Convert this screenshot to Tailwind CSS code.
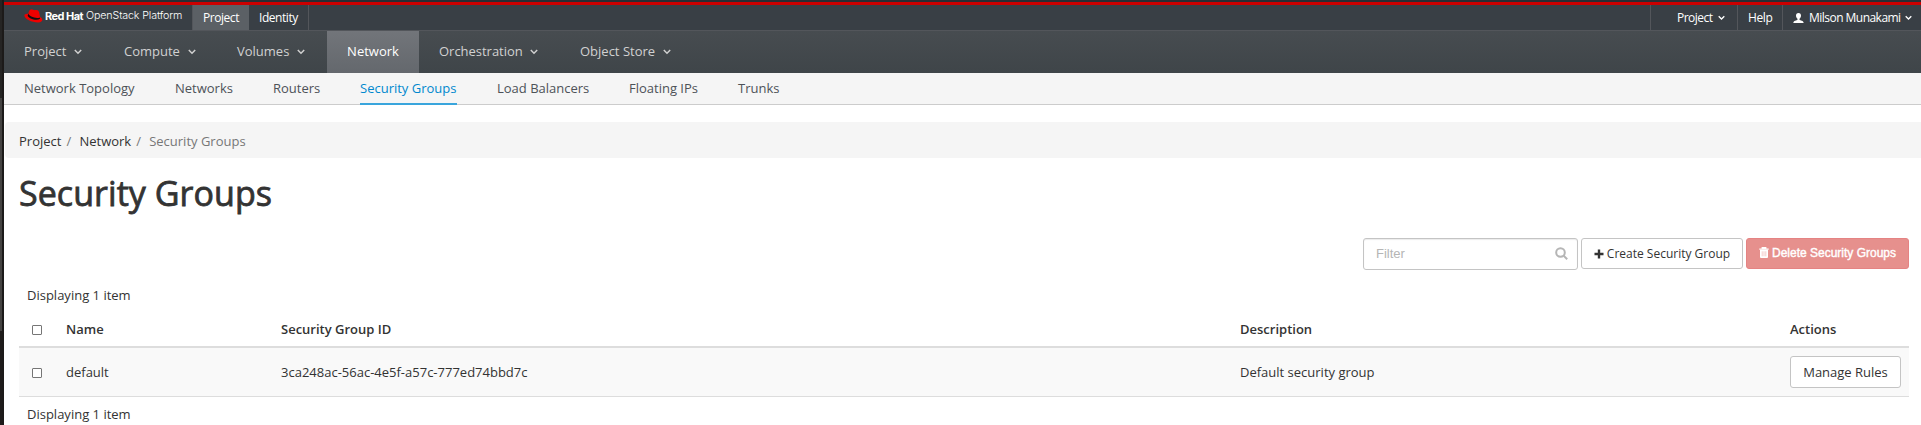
<!DOCTYPE html>
<html lang="en"><head><meta charset="utf-8"><title>Security Groups</title>
<script src="https://cdn.jsdelivr.net/npm/@tailwindcss/browser@4"></script></head>
<body class="bg-white font-['Open_Sans',sans-serif] text-[13px] text-[#333] overflow-hidden">
<div class="flex h-[425px]">
<div class="w-1 shrink-0 border-r-2 border-[#1c1a19] flex flex-col"><div class="h-[98px] bg-[#252423]"></div><div class="h-[233px] bg-[#444241]"></div><div class="grow bg-[#1f1c1b]"></div></div>
<div class="grow min-w-0">
<header>
<div class="h-0.5 bg-[#292e34]"></div><div class="h-[3px] bg-[#c00]"></div>
<div class="h-[26px] flex bg-[#393f45] border-b border-[#53565b] text-xs text-white leading-[25px]">
<div class="w-[188px] shrink-0 pl-5 flex items-start text-[11px] leading-[22px]">
<svg class="w-[19px] h-[14px] mt-1 shrink-0" viewBox="0 0 19 14"><path d="M4.3 4.7C2 4.5.3 5.2.4 6.6c.1 3.3 7.6 7.1 13.8 7 2.7-.1 4.2-1.4 4.1-3-.1-1.3-1.3-2.1-2.2-2.6L15 3.1C14.7 1.7 13.8 1 12.3 1c-1 0-1.4.3-2.4.1C8.7.7 8 .2 6.7.4 5.3.6 5 2.2 4.3 4.7Z" fill="#e00"/><path d="M4.3 4.6c.2 2.6 7.9 5.6 11.4 3.9l.4 1.3c-3.7 2.6-12.2-.6-12.4-3.4Z" fill="#111"/></svg>
<span class="w-[43px] shrink-0 pl-0.5 font-['Inter',sans-serif] font-bold tracking-[-0.55px] whitespace-nowrap">Red Hat</span><span class="font-['Inter',sans-serif] font-light whitespace-nowrap tracking-[-0.13px] text-[10.7px]">OpenStack Platform</span></div>
<div class="w-[57px] border-l border-[#53565b] bg-[#5b6065] pl-[10px] tracking-[-0.45px]">Project</div>
<div class="w-[60px] border-r border-[#53565b] pl-[10px] tracking-[-0.45px]">Identity</div>
<div class="ml-auto w-[87px] shrink-0 border-l border-[#53565b] flex items-center pl-[26px] gap-[5px]"><span class="tracking-[-0.5px]">Project</span><svg class="w-[7px] h-[6px]" viewBox="0 0 8 6"><path d="M.8 1 4 4.2 7.2 1" fill="none" stroke="currentColor" stroke-width="1.5"/></svg></div>
<div class="w-[45px] shrink-0 border-l border-[#53565b] pl-[10px] tracking-[-0.4px]">Help</div>
<div class="w-[139px] shrink-0 border-l border-[#53565b] flex items-center pl-[10px]"><svg class="w-[11px] h-[10px] shrink-0" viewBox="0 0 11 10" fill="#fff"><path d="M5.5 0C3.8 0 2.9 1.1 3 2.8c.1 1.5.7 2.3 1.5 3v.9C3.8 7.6.5 7.3.3 10h10.4C10.5 7.3 7.2 7.6 6.5 6.7v-.9c.8-.7 1.4-1.5 1.5-3C8.1 1.1 7.2 0 5.5 0Z"/></svg><span class="pl-[5px] w-[101px] shrink-0 tracking-[-0.53px] whitespace-nowrap">Milson Munakami</span><svg class="w-[7px] h-[6px] shrink-0" viewBox="0 0 8 6"><path d="M.8 1 4 4.2 7.2 1" fill="none" stroke="currentColor" stroke-width="1.5"/></svg></div>
</div>
<nav class="h-[42px] flex bg-linear-to-b from-[#474c50] to-[#3f4549] text-[#d1d1d1] leading-[40px] pl-5 pb-0.5 [background-clip:border-box]">
<div class="w-[100px] flex items-center gap-2">Project<svg class="w-2 h-[6px] mt-0.5" viewBox="0 0 8 6"><path d="M.8 1 4 4.2 7.2 1" fill="none" stroke="currentColor" stroke-width="1.5"/></svg></div>
<div class="w-[113px] flex items-center gap-2">Compute<svg class="w-2 h-[6px] mt-0.5" viewBox="0 0 8 6"><path d="M.8 1 4 4.2 7.2 1" fill="none" stroke="currentColor" stroke-width="1.5"/></svg></div>
<div class="w-[90px] flex items-center gap-2">Volumes<svg class="w-2 h-[6px] mt-0.5" viewBox="0 0 8 6"><path d="M.8 1 4 4.2 7.2 1" fill="none" stroke="currentColor" stroke-width="1.5"/></svg></div>
<div class="w-[92px] h-[42px] text-center text-white bg-linear-to-b from-[#72757a] to-[#64686d]">Network</div>
<div class="w-[161px] pl-5 pr-0 flex items-center gap-[7px] tracking-[-0.02px]">Orchestration<svg class="w-2 h-[6px] mt-0.5" viewBox="0 0 8 6"><path d="M.8 1 4 4.2 7.2 1" fill="none" stroke="currentColor" stroke-width="1.5"/></svg></div>
<div class="flex items-center gap-2 -ml-px pl-px">Object Store<svg class="w-2 h-[6px] mt-0.5" viewBox="0 0 8 6"><path d="M.8 1 4 4.2 7.2 1" fill="none" stroke="currentColor" stroke-width="1.5"/></svg></div>
</nav>
<nav class="h-8 flex bg-[#f5f5f5] border-b border-[#ccc] text-[#4d5258] leading-[31px] pl-5 whitespace-nowrap">
<div class="w-[151px]">Network Topology</div><div class="w-[98px]">Networks</div><div class="w-[87px]">Routers</div><div class="w-[97px] h-8 border-b-2 border-[#39a5dc] text-[#0088ce]">Security Groups</div><div class="w-[132px] ml-10">Load Balancers</div><div class="w-[109px]">Floating IPs</div><div>Trunks</div>
</nav>
</header>
<div class="mt-[17px] ml-px h-9 flex bg-[#f5f5f5] rounded-l-sm leading-[38px] pl-[14px] text-[#333] whitespace-nowrap"><span>Project</span><span class="pl-[5px] w-[18px] text-[#777]">/</span><span>Network</span><span class="pl-[5px] w-[18px] text-[#777]">/</span><span class="text-[#777]">Security Groups</span></div>
<main class="pl-[15px] pr-3">
<h1 class="h-20 pt-[15px] text-[34px] leading-10 font-normal tracking-[0.05px] [-webkit-text-stroke:0.8px_#333]">Security Groups</h1>
<div class="flex justify-end items-start h-[44px]">
<div class="w-[215px] h-8 mr-[3px] border border-[#c4c4c4] rounded-[3px] shadow-[inset_0_1px_1px_rgba(0,0,0,.08)] flex items-center justify-between pl-3 pr-[9px] pb-px font-['Liberation_Sans',sans-serif] text-[#b5b5b5]">Filter<svg class="w-[13px] h-[13px]" viewBox="0 0 13 13" fill="none" stroke="#b5b5b5" stroke-width="2"><circle cx="5.5" cy="5.5" r="4.3"/><path d="m8.7 8.7 3.5 3.5"/></svg></div>
<div class="w-[162px] h-[31px] mr-[3px] border border-[#c4c4c4] rounded-[3px] flex items-center justify-center gap-[3px] text-xs whitespace-nowrap"><svg class="w-[10px] h-[10px]" viewBox="0 0 10 10"><path d="M5 .5v9M.5 5h9" stroke="#333" stroke-width="2.4"/></svg><span class="pt-px">Create Security Group</span></div>
<div class="w-[163px] h-[31px] border border-[#e58383] bg-[#e6908d] rounded-[3px] flex items-center justify-center gap-[3px] pb-0.5 font-['Liberation_Sans',sans-serif] text-xs text-white whitespace-nowrap [-webkit-text-stroke:0.4px_white]"><svg class="w-[10px] h-[11px]" viewBox="0 0 10 11"><path d="M3.3 1.5V.7h3.4v.8M.3 2.1h9.4" fill="none" stroke="#fff" stroke-width="1.4"/><path d="M1 2.8h8V10q0 1-1 1H2q-1 0-1-1Z" fill="#fff"/><path d="M3.2 4.3v5M5 4.3v5M6.8 4.3v5" stroke="#e6908d" stroke-width=".45"/></svg>Delete Security Groups</div>
</div>
<div class="h-[30px] pl-2 leading-[26px]">Displaying 1 item</div>
<div class="h-9 border-b-2 border-[#ddd] grid grid-cols-[47px_215px_959px_550px_1fr] font-semibold leading-[35px]"><div class="pt-[13px] pl-[13px]"><div class="size-[10px] border border-[#767676] rounded-[1px] bg-white"></div></div><div>Name</div><div>Security Group ID</div><div>Description</div><div>Actions</div></div>
<div class="h-[49px] bg-[#f9f9f9] border-b border-[#ddd] grid grid-cols-[47px_215px_959px_550px_1fr] leading-[48px]"><div class="pt-5 pl-[13px]"><div class="size-[10px] border border-[#767676] rounded-[1px] bg-white"></div></div><div>default</div><div>3ca248ac-56ac-4e5f-a57c-777ed74bbd7c</div><div>Default security group</div><div class="pt-2"><div class="w-[111px] h-8 border border-[#c4c4c4] rounded-[3px] bg-white text-center leading-[31px]">Manage Rules</div></div></div>
<div class="h-7 pl-2 leading-[35px]">Displaying 1 item</div>
</main>
</div></div>
</body></html>
